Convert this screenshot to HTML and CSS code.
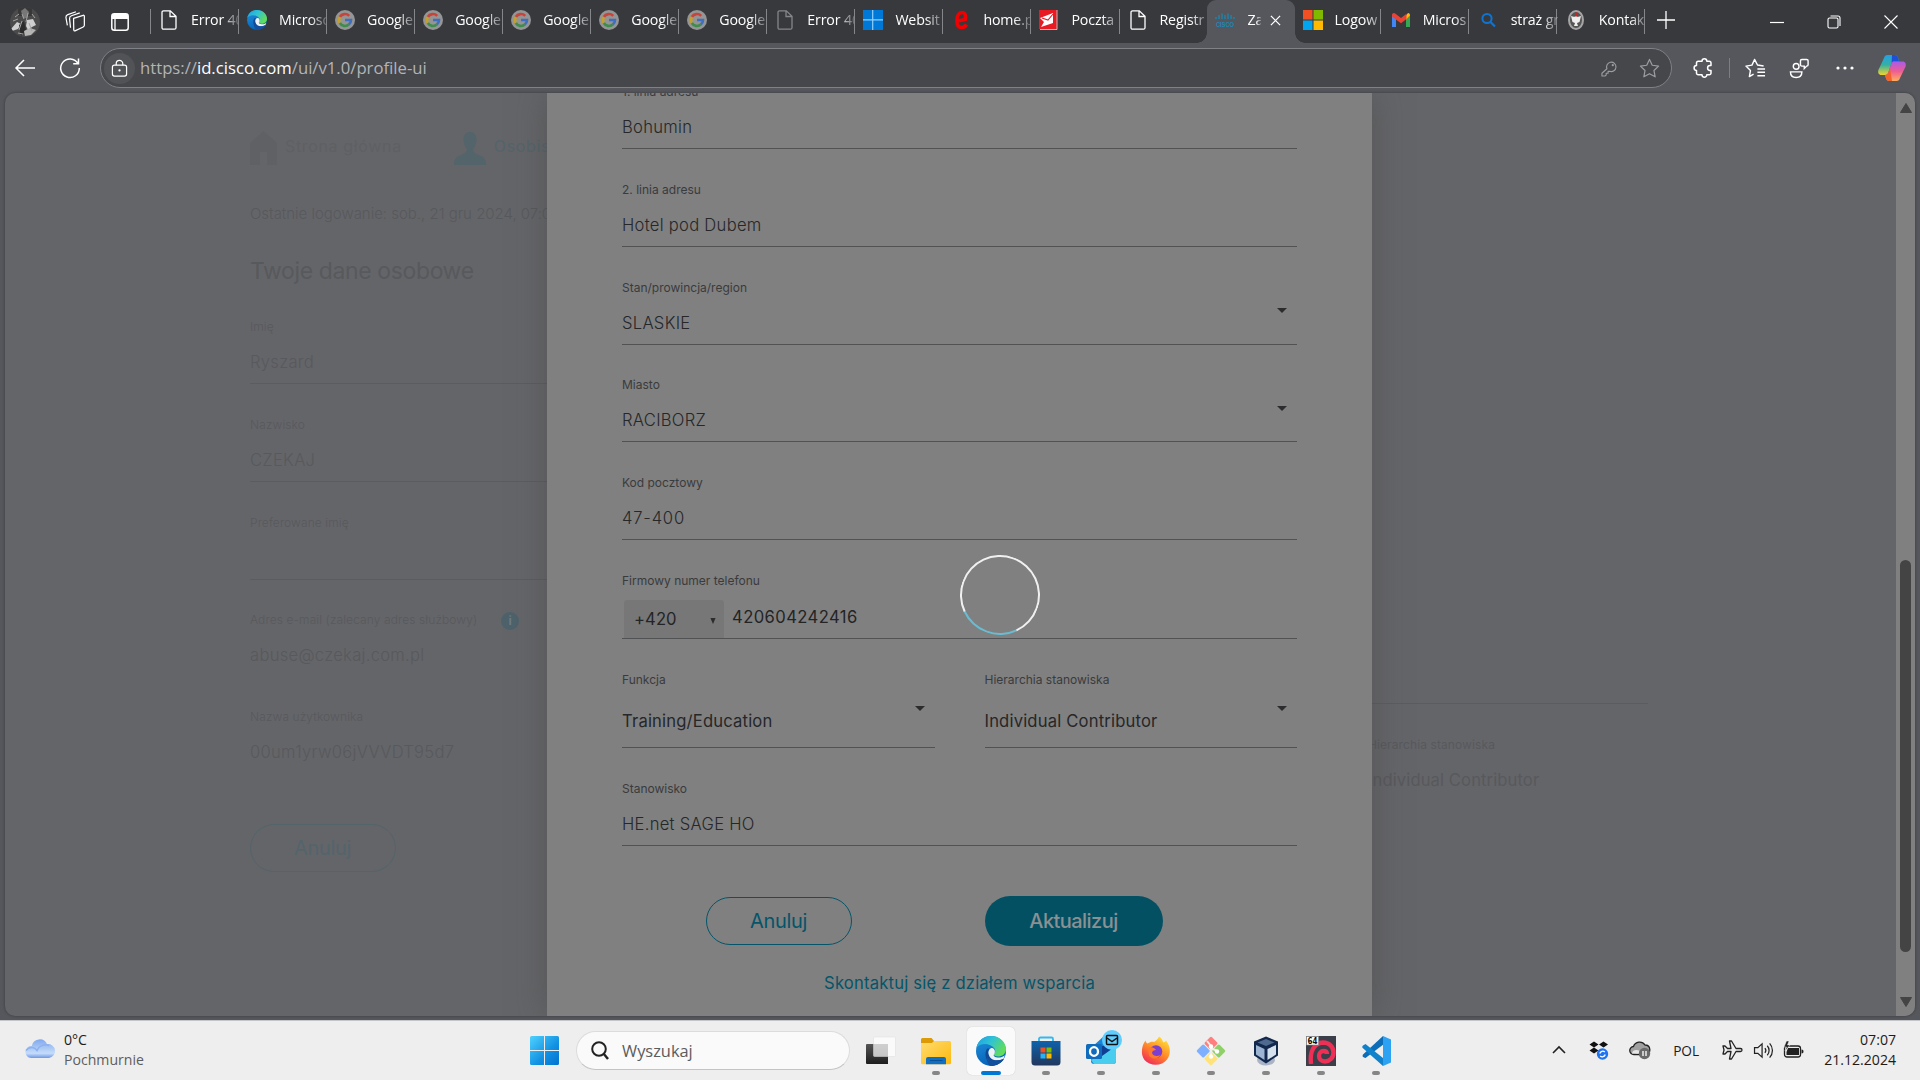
FILE: index.html
```
<!DOCTYPE html>
<html lang="pl">
<head>
<meta charset="utf-8">
<title>Zarządzanie profilem</title>
<link rel="stylesheet" href="styles.css">
</head>
<body>
<svg class="defs" aria-hidden="true">
  <defs>
    <linearGradient id="edgeA" x1="0" y1="0" x2="1" y2=".5"><stop offset="0" stop-color="#1b9de2"/><stop offset=".5" stop-color="#2fc3d4"/><stop offset="1" stop-color="#62dc5b"/></linearGradient>
    <linearGradient id="edgeB" x1="0" y1="0" x2=".4" y2="1"><stop offset="0" stop-color="#2292dc"/><stop offset="1" stop-color="#0562b8"/></linearGradient>
    <linearGradient id="winG" x1="0" y1="0" x2="1" y2="1"><stop offset="0" stop-color="#4fd2ff"/><stop offset=".6" stop-color="#1290e2"/><stop offset="1" stop-color="#0073cf"/></linearGradient>
    <linearGradient id="cloudG" x1="0" y1="0" x2="0" y2="1"><stop offset="0" stop-color="#80a9ee"/><stop offset=".75" stop-color="#c5dcfa"/><stop offset="1" stop-color="#6e98e6"/></linearGradient>
    <linearGradient id="folderG" x1="0" y1="0" x2="1" y2="1"><stop offset="0" stop-color="#ffdc70"/><stop offset="1" stop-color="#fcb90e"/></linearGradient>
    <linearGradient id="storeG" x1="0" y1="0" x2="0" y2="1"><stop offset="0" stop-color="#0f62ab"/><stop offset="1" stop-color="#22375e"/></linearGradient>
    <linearGradient id="foxG" x1=".8" y1="0" x2=".2" y2="1"><stop offset="0" stop-color="#ffe63e"/><stop offset=".5" stop-color="#ff8a26"/><stop offset="1" stop-color="#f0235e"/></linearGradient>
    <linearGradient id="copA" x1="0" y1="0" x2="0" y2="1"><stop offset="0" stop-color="#23a0e8"/><stop offset=".5" stop-color="#35b0a0"/><stop offset="1" stop-color="#f2d42c"/></linearGradient>
    <linearGradient id="copB" x1="0" y1="0" x2="0" y2="1"><stop offset="0" stop-color="#a95bea"/><stop offset=".5" stop-color="#ee5c93"/><stop offset="1" stop-color="#ffae5c"/></linearGradient>
    <linearGradient id="darkG" x1="0" y1="0" x2="0" y2="1"><stop offset="0" stop-color="#555"/><stop offset="1" stop-color="#1d1d1d"/></linearGradient>
    <symbol id="file" viewBox="0 0 20 20"><path d="M4.500.8h6.800L17 6.300V17.700a1.500 1.500 0 0 1-1.500 1.500h-11A1.500 1.500 0 0 1 3 17.700V2.300A1.500 1.500 0 0 1 4.500.8zM11 1v5.500h5.800" fill="none" stroke="currentColor" stroke-width="1.300"/></symbol>
    <symbol id="google" viewBox="0 0 20 20"><circle cx="10" cy="10" r="10" fill="#959595"/><g fill="none" stroke-width="2.600"><path d="M14.200 5.800A6 6 0 0 0 4.800 7" stroke="#c5453a"/><path d="M4.800 7a6 6 0 0 0 0 6" stroke="#c6a02a"/><path d="M4.800 13a6 6 0 0 0 9 1.600" stroke="#3e8d4e"/><path d="M13.800 14.600A6 6 0 0 0 16 10h-6" stroke="#3f6fc0"/></g></symbol>
    <symbol id="edge" viewBox="0 0 30 30"><circle cx="15" cy="15" r="15" fill="url(#edgeB)"/><path d="M.3 12C2 4 8 0 15 0c9 0 15 6.500 15 13 0 5-4 7.500-8 7.500-3 0-4.500-1-4-2.500 1.500-2 1.500-4 .5-5.500C14 6.500 4 6.500.3 12z" fill="url(#edgeA)"/><path d="M11.200 12.500C8 17 9 25 15.500 28c5 1.500 10-1 12.500-5-6 3-14 2-15.500-5-.3-2 .3-4 1.300-5.300z" fill="#104a95"/><path d="M18 18.500c-1.200 1.400 1 3 4.500 3 2.600 0 4.500-.8 6.300-2.300L27.500 23c-6.500 3-14 1-15-5.500-.5-3 1.500-5.500 3.500-5.500 2.500 0 4 4 2 6.500z" fill="#eef3f7"/><path d="M11.200 20C13 25 21 26 28 22.600 25 28 19 31 13.500 29.500 11 27 10.500 23 11.200 20z" fill="#124f9c"/></symbol>
    <symbol id="caret" viewBox="0 0 10 5"><path d="M0 0h10L5 5z" fill="#2c2c2e"/></symbol>
  </defs>
</svg>

<header class="tabstrip">
  <div class="strip-tools">
    <svg class="avatar" viewBox="0 0 30 30"><defs><clipPath id="av"><circle cx="15" cy="15" r="15"/></clipPath></defs><g clip-path="url(#av)"><path d="M0 0h30v30H0z" fill="#4b4b4b"/><path d="M8 0h14v9H8z" fill="#383838"/><path d="M11 4l4-3 4 4-2 6h-4z" fill="#777"/><path d="M1 22l6-7 4 2-3 5-6 2zM17 13l6-1 3 6-4 2-4 3-2-4z" fill="#cfcfcf"/><path d="M9 18l5-4 2 9-5 6z" fill="#2b2b2b"/><path d="M14 24l6-3 6 2-5 5-6 1z" fill="#b5b5b5"/><path d="M12 7l2 5M18 6l-2 9M5 10l4-3M22 7l3 4M3 14l5-2M12 14l-3 9M19 16l3 8M8 26l5 1" stroke="#a2a2a2"/></g></svg>
    <svg class="i22 ws" viewBox="0 0 22 22"><g fill="none" stroke="currentColor" stroke-width="1.300" stroke-linejoin="round"><path d="M9.500 7.800l10-3.300a1 1 0 0 1 1.300 1v9.500a2 2 0 0 1-1.200 1.700L11 20.800a1 1 0 0 1-1.300-1z"/><path d="M6.300 17.500L5.300 8a3 3 0 0 1 2-3L16 2"/><path d="M3 15L1.500 6.800a3 3 0 0 1 2-3L12 .8"/></g></svg>
    <svg class="i18" viewBox="0 0 18 18"><rect x=".8" y=".8" width="16.400" height="16.400" rx="2.500" fill="none" stroke="#fff" stroke-width="1.500"/><path d="M1 3a2 2 0 0 1 2-2h12a2 2 0 0 1 2 2v3H1z" fill="#fff"/><path d="M4 6v11" stroke="#fff" stroke-width="1.300"/></svg>
  </div>
  <nav class="tabs">
    <div class="tab"><svg><use href="#file"/></svg><span>Error 40</span></div>
    <div class="tab"><svg><use href="#edge"/></svg><span>Microso</span></div>
    <div class="tab"><svg><use href="#google"/></svg><span>Google</span></div>
    <div class="tab"><svg><use href="#google"/></svg><span>Google</span></div>
    <div class="tab"><svg><use href="#google"/></svg><span>Google</span></div>
    <div class="tab"><svg><use href="#google"/></svg><span>Google</span></div>
    <div class="tab"><svg><use href="#google"/></svg><span>Google</span></div>
    <div class="tab"><svg class="dim"><use href="#file"/></svg><span>Error 40</span></div>
    <div class="tab"><svg viewBox="0 0 20 20"><path d="M0 0h20v20H0z" fill="#0078d7"/><path d="M9.700 0v20M0 9.800h20" stroke="#8fd0ff" stroke-width="1.200"/></svg><span>Websit</span></div>
    <div class="tab"><svg viewBox="0 0 20 20"><path d="M15.500 14.500c-1.200 2-3 3-5.200 3-3 0-4.300-3-4.300-6.800C6 5.500 8 2.500 11 2.500c3.500 0 4 4 3.300 7L6.500 11" fill="none" stroke="#f00000" stroke-width="3.600"/></svg><span>home.p</span></div>
    <div class="tab"><svg viewBox="0 0 20 20"><path d="M0 0h18v19H0z" fill="#e81b23"/><path d="M18 0v19.500H1" fill="none" stroke="#bbb"/><path d="M1 8l13-5v10L2 17l3-5z" fill="#fff"/><path d="M3 8l6 2 5-6" fill="none" stroke="#e81b23" stroke-width="1.100"/></svg><span>Poczta</span></div>
    <div class="tab"><svg><use href="#file"/></svg><span>Registr</span></div>
    <div class="tab active"><svg viewBox="0 0 20 20"><path d="M1 7v2M4 5v4M7 3.500V9M10 5v4M13 3.500V9M16 5v4M19 7v2" stroke="#1789b3" stroke-width="1.300"/><text x="1" y="17" textLength="18" lengthAdjust="spacingAndGlyphs" class="cisco">CISCO</text></svg><span>Za</span><svg class="close" viewBox="0 0 12 12"><path d="M1 1l10 10M11 1L1 11" stroke="#fff" stroke-width="1.400"/></svg></div>
    <div class="tab after"><svg viewBox="0 0 20 20"><path d="M0 0h9.500v9.500H0z" fill="#f25022"/><path d="M10.500 0H20v9.500h-9.500z" fill="#7fba00"/><path d="M0 10.500h9.500V20H0z" fill="#00a4ef"/><path d="M10.500 10.500H20V20h-9.500z" fill="#ffb900"/></svg><span>Logow</span></div>
    <div class="tab after"><svg viewBox="0 0 20 20"><path d="M1 4.500V17h4V9z" fill="#4285f4"/><path d="M19 4.500V17h-4V9z" fill="#34a853"/><path d="M15 5.500L17 3c1.500 0 2 1 2 2.500L15 9.500z" fill="#fbbc04"/><path d="M1 5.500C1 3 3 2.500 4.500 3.700L10 8l5.500-4.300V9L10 13.300 1 6.500z" fill="#ea4335"/></svg><span>Micros</span></div>
    <div class="tab after"><svg viewBox="0 0 20 20"><circle cx="8" cy="8.500" r="4.600" fill="none" stroke="#0f74d1" stroke-width="2"/><path d="M11.500 12l4.500 4.500" stroke="#0f74d1" stroke-width="2.200"/></svg><span>straż gr</span></div>
    <div class="tab after"><svg viewBox="0 0 20 20"><ellipse cx="9" cy="10" rx="7" ry="9" fill="#555" stroke="#a5a5a5" stroke-width="2"/><path d="M9 4l1.500 3L14 6l-1.500 6L10 13l1 3H7l1-3-2.500-1L4 6l3.500 1z" fill="#eee"/><path d="M8 2.500h2.500v4H8z" fill="#c22"/></svg><span>Kontak</span></div>
  </nav>
  <svg class="plus" viewBox="0 0 18 18"><path d="M9 0v18M0 9h18" stroke="#fff" stroke-width="1.300"/></svg>
  <div class="window-buttons">
    <svg viewBox="0 0 14 14"><path d="M0 7.500h14" stroke="#fff" stroke-width="1.200"/></svg>
    <svg viewBox="0 0 14 14"><g fill="none" stroke="#fff" stroke-width="1.100"><rect x="1" y="3" width="10" height="10" rx="1.500"/><path d="M3.500 1H11a2 2 0 0 1 2 2v8"/></g></svg>
    <svg viewBox="0 0 14 14"><path d="M.5.500l13 13M13.500.5l-13 13" stroke="#fff" stroke-width="1.100"/></svg>
  </div>
</header>

<div class="toolbar">
  <svg class="back" viewBox="0 0 20 18"><path d="M9 1L1 9l8 8M1 9h19" fill="none" stroke="#fff" stroke-width="1.500"/></svg>
  <svg class="reload" viewBox="0 0 22 22"><path d="M19 6.500A9.300 9.300 0 1 0 20.300 11M19.500 1.500v5.300h-5.300" fill="none" stroke="#fff" stroke-width="1.500"/></svg>
  <div class="address">
    <div class="lock"><svg viewBox="0 0 18 18"><g fill="none" stroke="#fff" stroke-width="1.300"><rect x="1.500" y="5.500" width="15" height="11.500" rx="2.200"/><path d="M5.500 5.500V4a3.500 3.500 0 0 1 7 0v1.500"/></g><circle cx="9" cy="11" r="1.200" fill="#fff"/></svg></div>
    <div class="url">https://<b>id.cisco.com</b>/ui/v1.0/profile-ui</div>
    <svg class="key" viewBox="0 0 18 18"><path d="M6.300 9.300a5 5 0 1 1 3 2.700H7.500v2H5.500v2l-1.300 1H1v-3z" fill="none" stroke="#9c9da0" stroke-width="1.200" stroke-linejoin="round"/><circle cx="12.500" cy="5.500" r="1.200" fill="#9c9da0"/></svg>
    <svg class="star" viewBox="0 0 22 22"><path d="M11 1.500l2.900 6.100 6.600.9-4.800 4.600 1.200 6.600-5.900-3.200-5.900 3.200 1.200-6.600L1.500 8.500l6.600-.9z" fill="none" stroke="#9c9da0" stroke-width="1.300" stroke-linejoin="round"/></svg>
  </div>
  <svg class="puzzle" viewBox="0 0 22 22"><path d="M3.500 6A1.800 1.800 0 0 1 5.300 4.200H9a2.400 2.400 0 0 1 4.800 0h2.400A1.800 1.800 0 0 1 18 6v2.600h-1a2.400 2.400 0 0 0 0 4.800h1V16a1.800 1.800 0 0 1-1.800 1.800h-2.400a2.400 2.400 0 0 1-4.800 0H5.300A1.800 1.800 0 0 1 3.500 16v-2.600a2.400 2.400 0 0 1 0-4.800z" fill="none" stroke="#fff" stroke-width="1.500" stroke-linejoin="round"/></svg>
  <i class="divider"></i>
  <svg class="fav" viewBox="0 0 22 22"><path d="M19.500 8.300l-6.400-1L10 1.500 7.300 7.500 1 8.500l4.700 4.700-1.100 6.300L9 17M13 11.500h8M13 15h8M13 18.500h8" fill="none" stroke="#fff" stroke-width="1.500" stroke-linejoin="round"/></svg>
  <svg class="people" viewBox="0 0 22 22"><g fill="none" stroke="#fff" stroke-width="1.500"><circle cx="7.500" cy="8.800" r="3"/><path d="M1.500 14.500h12c0 4-2.300 6-6 6s-6-2-6-6zM12 3a1.500 1.500 0 0 1 1.500-1.500h5A1.500 1.500 0 0 1 20 3v4a1.500 1.500 0 0 1-1.500 1.500L16 11V8.500h-2.500A1.500 1.500 0 0 1 12 7z"/></g></svg>
  <svg class="dots" viewBox="0 0 18 4"><g fill="#fff"><circle cx="2" cy="2" r="1.600"/><circle cx="9" cy="2" r="1.600"/><circle cx="16" cy="2" r="1.600"/></g></svg>
  <svg class="copilot" viewBox="0 0 28 26"><path d="M6 3c.6-2 1.500-3 3.500-3h7c2 0 3 1 3.600 3l1 3.500h-5c-1.500 0-2.500 1-3 2.700L10.500 17c-.6 2-1.500 3-3.500 3H3.500C.5 20-.3 17.500.4 15z" fill="url(#copA)"/><path d="M14 0h2.500c2 0 3 1 3.600 3l1 3.500H16c-1 0-1.800.5-2.400 1.400z" fill="#1d4fd7"/><path d="M22 23c-.6 2-1.500 3-3.500 3h-7c-2 0-3-1-3.600-3l-.9-3c2 0 3-1 3.600-3l2.400-7.700c.5-1.800 1.500-2.800 3-2.800h8.500c3 0 3.800 2.500 3.100 5z" fill="url(#copB)"/><path d="M14 26h-2.500c-2 0-3-1-3.600-3L7 20c2 0 3-1 3.600-3l1.400-4.500z" fill="#f2622d"/></svg>
</div>

<main class="viewport">
  <div class="page">
    <nav class="page-nav">
      <svg class="home" viewBox="0 0 27 34"><path d="M13.500 0L27 12v22H17V21h-7v13H0V12z" fill="#606164"/></svg><span class="faint">Strona główna</span>
      <svg class="person" viewBox="0 0 32 33"><path d="M16 0c4 0 6.500 3 6.500 7.500 0 4.500-2 8-3.500 10 0 3 3 4.500 8 6.500 3.500 1.500 5 4 5 9H0c0-5 1.500-7.500 5-9 5-2 8-3.500 8-6.500-1.500-2-3.500-5.500-3.500-10C9.500 3 12 0 16 0z" fill="#53646b"/></svg><span class="teal">Osobiste</span>
    </nav>
    <p class="last-login">Ostatnie logowanie: sob., 21 gru 2024, 07:06</p>
    <h1>Twoje dane osobowe</h1>
    <div class="columns">
      <section class="col-left">
        <div class="field first"><label>Imię</label><span>Ryszard</span></div>
        <div class="field"><label>Nazwisko</label><span>CZEKAJ</span></div>
        <div class="field"><label>Preferowane imię</label><span></span></div>
        <div class="field plain"><label>Adres e-mail (zalecany adres służbowy)<i class="info">i</i></label><span>abuse@czekaj.com.pl</span></div>
        <div class="field plain"><label>Nazwa użytkownika</label><span>00um1yrw06jVVVDT95d7</span></div>
        <div class="btn outline">Anuluj</div>
      </section>
      <section class="col-right">
        <div class="field plain"><label>Hierarchia stanowiska</label><span>Individual Contributor</span></div>
      </section>
    </div>
  </div>

  <form class="modal">
    <div class="field f1"><label>1. linia adresu</label><span>Bohumin</span></div>
    <div class="field"><label>2. linia adresu</label><span>Hotel pod Dubem</span></div>
    <div class="field"><label>Stan/prowincja/region</label><span>SLASKIE</span><svg class="caret"><use href="#caret"/></svg></div>
    <div class="field short"><label>Miasto</label><span>RACIBORZ</span><svg class="caret"><use href="#caret"/></svg></div>
    <div class="field"><label>Kod pocztowy</label><span class="digits">47-400</span></div>
    <div class="field phone"><label>Firmowy numer telefonu</label>
      <div class="phone-row"><div class="prefix">+420<svg viewBox="0 0 6 7"><path d="M0 0h6L3 7z" fill="#2c2c2e"/></svg></div><span>420604242416</span></div>
    </div>
    <div class="pair">
      <div class="field"><label>Funkcja</label><span>Training/Education</span><svg class="caret"><use href="#caret"/></svg></div>
      <div class="field"><label>Hierarchia stanowiska</label><span>Individual Contributor</span><svg class="caret"><use href="#caret"/></svg></div>
    </div>
    <div class="field"><label>Stanowisko</label><span>HE.net SAGE HO</span></div>
    <div class="actions"><div class="btn outline">Anuluj</div><div class="btn solid">Aktualizuj</div></div>
    <a class="support">Skontaktuj się z działem wsparcia</a>
  </form>
  <div class="spinner"></div>

  <div class="scrollbar">
    <svg viewBox="0 0 12 10"><path d="M6 0.500L11.500 9.500H.5z" fill="#444" stroke="#444" stroke-linejoin="round"/></svg>
    <i></i>
    <svg viewBox="0 0 12 10"><path d="M6 9.500L.5.500h11z" fill="#444" stroke="#444" stroke-linejoin="round"/></svg>
  </div>
</main>

<footer class="taskbar">
  <div class="weather">
    <svg viewBox="0 0 30 20"><path d="M6 19.500a6 6 0 0 1 .8-12A8 8 0 0 1 22 5.600a7 7 0 0 1 2 13.900z" fill="url(#cloudG)"/><path d="M1 12c4-5 9-3 11 0 2-5 8-7 12-5" fill="none" stroke="#8db1ef" stroke-width="1.500"/></svg>
    <div><p>0°C</p><p class="muted">Pochmurnie</p></div>
  </div>
  <div class="dock">
    <svg class="start" viewBox="0 0 29 29"><path d="M0 1.500A1.500 1.500 0 0 1 1.500 0H14v14H0zM15 0h12.500A1.500 1.500 0 0 1 29 1.500V14H15zM0 15h14v14H1.500A1.500 1.500 0 0 1 0 27.500zM15 15h14v12.500a1.500 1.500 0 0 1-1.500 1.500H15z" fill="url(#winG)"/></svg>
    <div class="search"><svg viewBox="0 0 18 19"><circle cx="8" cy="8" r="6.800" fill="none" stroke="#222" stroke-width="2"/><path d="M12.500 12.500L17 18" stroke="#222" stroke-width="2.400"/></svg>Wyszukaj</div>
    <div class="app"><svg viewBox="0 0 30 30"><path d="M0 9a1 1 0 0 1 1-1h21v20H1a1 1 0 0 1-1-1z" fill="url(#darkG)"/><rect x="7.500" y="1" width="22" height="19.500" rx="1" fill="#fff" fill-opacity=".72" stroke="#ddd" stroke-width=".5"/></svg></div>
    <div class="app run"><svg viewBox="0 0 30 30"><path d="M0 3.500A1.500 1.500 0 0 1 1.500 2h9l2.500 3v3H0z" fill="#db9a06"/><path d="M0 7h11l2-2h15.500A1.500 1.500 0 0 1 30 6.500V27a1.300 1.300 0 0 1-1.300 1.300H1.300A1.300 1.300 0 0 1 0 27z" fill="url(#folderG)"/><path d="M5 28.300V23a2 2 0 0 1 2-2h16a2 2 0 0 1 2 2v5.300z" fill="#0f6fc3"/><path d="M9 24.500h12.500" stroke="#0a4f94"/></svg></div>
    <div class="app run current"><svg><use href="#edge"/></svg></div>
    <div class="app run"><svg viewBox="0 0 30 30"><path d="M8 6V3a1.500 1.500 0 0 1 1.500-1.500h11A1.500 1.500 0 0 1 22 3v3" fill="none" stroke="#35b8ee" stroke-width="1.800"/><path d="M.5 5h29v21a3.500 3.500 0 0 1-3.500 3.500H4A3.500 3.500 0 0 1 .5 26z" fill="url(#storeG)"/><path d="M9.500 11.500h5v5h-5z" fill="#f25022"/><path d="M15.500 11.500h5v5h-5z" fill="#7fba00"/><path d="M9.500 17.500h5v5h-5z" fill="#26b2f5"/><path d="M15.500 17.500h5v5h-5z" fill="#ffb900"/></svg></div>
    <div class="app run"><svg class="outlook" viewBox="0 0 36 36"><path d="M6 17L18 6l12 10v15a3 3 0 0 1-3 3H8a3 3 0 0 1-3-3z" fill="#1686d9"/><path d="M30 16v15a3 3 0 0 1-3 3H8l-3-4z" fill="#49cdee"/><path d="M14 16h16L16 26z" fill="#103f91"/><rect y="14" width="16" height="15" rx="1.500" fill="#0f6cbd"/><ellipse cx="8" cy="21.500" rx="4" ry="4.300" fill="none" stroke="#fff" stroke-width="2.300"/><circle cx="26" cy="10" r="10" fill="#60cdff"/><g fill="none" stroke="#111" stroke-width="1.500"><rect x="20.500" y="5.500" width="11" height="9" rx="1"/><path d="M21 8l5 3.500L31 8"/></g></svg></div>
    <div class="app run"><svg viewBox="0 0 30 30"><path d="M18 .5c3 2 4 4.500 4 6 2-.5 2.500-1 3-2 5 6.500 5 14 1 19-5 7-17 7-22.500.5C-1 18 1 9 4.500 4.500c.5 2 1 2.500 2 3C9 6 11 5.500 13 6c2-1 4-3 5-5.500z" fill="url(#foxG)"/><circle cx="15" cy="15.500" r="6.300" fill="#7c3fd0"/><path d="M7 12c4-2 7 0 8 2-2 0-4 1-4 3 1 3 5 4 8 2-1 4-9 5-11 0z" fill="#ff7a2c"/></svg></div>
    <div class="app run"><svg viewBox="0 0 30 30"><g transform="rotate(45 15 15)"><rect x="4.500" y="4.500" width="10" height="10" rx="1.500" fill="#ff7f7f"/><rect x="15.500" y="4.500" width="10" height="10" rx="1.500" fill="#8fd068"/><rect x="4.500" y="15.500" width="10" height="10" rx="1.500" fill="#7fb0ff"/><rect x="15.500" y="15.500" width="10" height="10" rx="1.500" fill="#ffe37a"/></g><path d="M11 5l4 5v11M15 12l6 3" stroke="#f2efe6" stroke-width="2" fill="none"/><circle cx="15" cy="10.500" r="2.200" fill="#fff"/><circle cx="21" cy="15.500" r="2.200" fill="#fff"/><circle cx="15" cy="20.500" r="2.200" fill="#fff"/></svg></div>
    <div class="app run"><svg viewBox="0 0 30 30"><ellipse cx="15" cy="24" rx="9" ry="5.500" fill="#aab4c6"/><path d="M15 .5l12 5v14l-12 8-12-8v-14z" fill="#12284c"/><path d="M15 3l8.500 3.500L15 10 6.500 6.500z" fill="#50698f"/><path d="M5 9l8.500 4v11L5 18.500z" fill="#9db4d2"/><path d="M25 9l-8.500 4v11l8.500-5.500z" fill="#d5e1ef"/></svg></div>
    <div class="app run"><svg viewBox="0 0 30 30"><path d="M0 0h30v30H0z" fill="#3a3f49"/><path d="M5 28C3.500 15 8 7 17 6.500c6.500 0 10.500 4.500 10.500 10S23.500 25.500 19 25.500c-4 0-6-2.700-6-5.500s2-5 4.500-5 3.500 1.500 3.500 3" fill="none" stroke="#ee2f56" stroke-width="4.400"/><rect x=".5" y=".5" width="12" height="8.500" fill="#fff" stroke="#888" stroke-width=".6"/><text x="1.500" y="7.600" textLength="10" lengthAdjust="spacingAndGlyphs" class="badge64">64</text></svg></div>
    <div class="app run"><svg viewBox="0 0 30 30"><path d="M22 0L2 18.500c-1 1 0 2.500 1 3l1.500.5L23 8z" fill="#0d6db8"/><path d="M4.500 8L2 9.500c-1 .8-1 2 0 2.800L22 30V22z" fill="#1082cc"/><path d="M22 0l8 3.500v23L22 30z" fill="#2ea2f2"/></svg></div>
  </div>
  <div class="tray">
    <svg class="chev" viewBox="0 0 14 8"><path d="M1 7l6-6 6 6" fill="none" stroke="#222" stroke-width="1.600"/></svg>
    <svg class="dropbox" viewBox="0 0 20 20"><path d="M5 1.500l4.500 3L5 7.500l-4.500-3zM14.500 1.500l4.500 3-4.500 3-4.500-3zM5 7.500l4.500 3-4.500 3-4.500-3z" fill="#111"/><circle cx="13.500" cy="14" r="5.700" fill="#1e73f0"/><path d="M10.800 13.500a3 3 0 0 1 5-1.500M16.200 14.500a3 3 0 0 1-5 1.500" fill="none" stroke="#fff" stroke-width="1.300"/></svg>
    <svg class="cloud" viewBox="0 0 22 20"><path d="M5 14.500a4 4 0 0 1-.5-8A6.500 6.500 0 0 1 16 5a4.800 4.800 0 0 1 1 9.500z" fill="#a0a0a0" stroke="#222" stroke-width="1.300"/><path d="M3 13.500c0-4 5-4 7-3l4 3.500z" fill="#e6e6e6"/><circle cx="15.500" cy="13.500" r="5.700" fill="#6a6a6a"/><path d="M14 11v5M17 11v5" stroke="#fff" stroke-width="1.300"/></svg>
    <span class="lang">POL</span>
    <svg class="plane" viewBox="0 0 22 20"><path d="M1 6h2l2.500 2.500H9L7.500 1h2L14 8.500h4.500a1.500 1.500 0 0 1 0 3H14L9.500 19h-2L9 11.500H5.500L3 14H1l1-4z" fill="none" stroke="#222" stroke-width="1.300" stroke-linejoin="round"/></svg>
    <svg class="sound" viewBox="0 0 21 18"><g fill="none" stroke="#222" stroke-width="1.300"><path d="M1 6h3.500L9 2v14l-4.500-4H1z"/><path d="M12 6.500a4 4 0 0 1 0 5M14.500 4a7.500 7.500 0 0 1 0 10M17 1.500a11 11 0 0 1 0 15"/></g></svg>
    <svg class="battery" viewBox="0 0 21 18"><rect x="1.500" y="5" width="16" height="11" rx="2.500" fill="none" stroke="#222" stroke-width="1.300"/><path d="M5 7h11v7H3.500v-3zM18.500 8.500c1.500 0 2 .8 2 2s-.5 2-2 2z" fill="#222"/><path d="M3.500 0L1 6h2.500L2 10l5-6H4.500L6 0z" fill="#222" stroke="#eee" stroke-width=".5"/></svg>
    <div class="clock"><p>07:07</p><p>21.12.2024</p></div>
  </div>
</footer>
</body>
</html>
```
FILE: styles.css
```
* { box-sizing: border-box; }
body { margin: 0; width: 1920px; height: 1080px; overflow: hidden; display: flex; flex-direction: column; background: #56575d; font-family: "Open Sans", sans-serif; }
p, h1 { margin: 0; font-weight: 400; }
svg { display: block; flex: none; overflow: visible; }
.defs { position: absolute; width: 0; height: 0; }

/* tab strip */
.tabstrip { height: 43px; flex: none; display: flex; align-items: center; background: #38393d; color: #fff; }
.strip-tools { width: 150px; height: 40px; padding-left: 10px; display: flex; align-items: center; }
.avatar { width: 30px; height: 30px; }
.i22 { width: 22px; height: 21px; margin-left: 24px; }
.i18 { width: 18px; height: 18px; margin-left: 25px; }
.tabs { display: flex; align-self: stretch; }
.tab { width: 88.050px; height: 40px; display: flex; align-items: center; padding-left: 9px; font-size: 14.200px; letter-spacing: -.15px; position: relative; }
.tab::before { content: ""; position: absolute; left: 0; top: 9px; width: 1px; height: 25px; background: #85868a; }
.tab svg { width: 20px; height: 20px; }
.tab svg.dim { color: #85868a; }
.tab span { margin: 0 0 2px 12px; width: 47px; overflow: hidden; white-space: nowrap; -webkit-mask-image: linear-gradient(90deg, #000 65%, rgba(0, 0, 0, .25)); mask-image: linear-gradient(90deg, #000 65%, rgba(0, 0, 0, .25)); }
.tab.active { height: 43px; padding: 0 0 3px 8px; background: #56575d; border-radius: 9px 9px 0 0; }
.tab.active::before, .tab.active::after { left: -10px; top: auto; bottom: 0; width: 10px; height: 10px; background: radial-gradient(circle at 0 0, #38393d 9.500px, #56575d 10px); }
.tab.active::after { content: ""; position: absolute; left: 100%; background: radial-gradient(circle at 100% 0, #38393d 9.500px, #56575d 10px); }
.tab.active span { width: 13px; margin-left: 13px; }
.tab.active .close { width: 11px; height: 11px; margin-left: 9px; }
.cisco { font: 700 6.500px "Liberation Sans", sans-serif; fill: #1789b3; }
.tab.after { padding-left: 8px; }
.tab.after::before { left: auto; right: 2px; }
.plus { width: 18px; height: 18px; margin-left: 10px; margin-top: -4px; }
.window-buttons { display: flex; gap: 43px; margin-left: auto; margin-right: 22px; }
.window-buttons svg { width: 14px; height: 14px; }

/* toolbar */
.toolbar { height: 50px; flex: none; display: flex; align-items: center; padding-left: 15px; }
.back { width: 20px; height: 18px; }
.reload { width: 22px; height: 22px; margin-left: 24px; }
.address { width: 1572px; height: 40px; margin-left: 19px; display: flex; align-items: center; padding-left: 3px; border: 1px solid #808186; border-radius: 20px; background: #46474b; }
.lock { width: 31px; height: 31px; border-radius: 50%; background: #525357; display: flex; align-items: center; justify-content: center; }
.lock svg { width: 17px; height: 17px; }
.url { flex: 1; margin-left: 5px; font-size: 16.700px; line-height: 24px; color: #b3b4b7; }
.url b { font-weight: 400; color: #fff; }
.key { width: 17px; height: 17px; }
.star { width: 21px; height: 21px; margin: 0 11px 0 21px; }
.puzzle { width: 22px; height: 22px; margin-left: 21px; }
.divider { width: 1px; height: 20px; background: #7d7e83; margin-left: 14px; }
.fav { width: 21px; height: 21px; margin-left: 15px; }
.people { width: 21px; height: 21px; margin-left: 23px; }
.dots { width: 18px; height: 4px; margin-left: 26px; }
.copilot { width: 28px; height: 26px; margin-left: 24px; }

/* web page behind the dialog */
.viewport { width: 1910px; height: 923px; flex: none; margin-left: 5px; position: relative; display: flex; overflow: hidden; border-radius: 10px; background: #646569; box-shadow: 0 0 3px rgba(0, 0, 0, .35); font-family: Inter, sans-serif; }
.page { flex: 1; padding: 30px 0 0 245px; color: #58595c; white-space: nowrap; }
.page-nav { height: 50px; display: flex; align-items: center; font-size: 16px; }
.home { width: 27px; height: 34px; }
.person { width: 32px; height: 33px; margin-left: 52px; }
.page-nav span { margin-left: 8px; line-height: 20px; padding-bottom: 4px; font-weight: 400; letter-spacing: .65px; }
.faint { color: #5f6063; }
.teal { color: #53646b; }
.last-login { margin-top: 26px; line-height: 30px; font-size: 15px; font-weight: 300; letter-spacing: -.02px; }
h1 { margin-top: 22px; line-height: 40px; font-size: 23px; letter-spacing: -.38px; }
.columns { display: flex; }
.col-left { width: 640px; }
.col-right { width: 280px; margin: 412px 0 0 478px; border-top: 1px solid #5b5c60; }
.page .field { border-bottom-color: #5b5c60; }
.page .plain { border-color: transparent; }
.page .first { height: 93px; }
.page .field + .plain, .page .plain + .plain { height: 97px; }
.col-right .field { font-weight: 400; letter-spacing: .1px; }
.page .btn { margin-top: 50px; border-color: #53646b; color: #53646b; }
.info { display: inline-block; width: 18px; height: 18px; margin: -1px 0 -2px 24px; border-radius: 50%; background: #4d626b; color: #6d7a80; text-align: center; font: 700 12px/18px Inter, sans-serif; vertical-align: middle; }

/* shared form parts */
.field { height: 98px; flex: none; position: relative; display: flex; flex-direction: column; justify-content: flex-end; border-bottom: 1px solid #515253; padding-bottom: 11px; font-size: 16.600px; letter-spacing: .28px; font-weight: 300; white-space: nowrap; }
.field label { line-height: 16px; margin-bottom: 17px; font-size: 12px; letter-spacing: .1px; }
.field > span { line-height: 20px; height: 20px; }
.btn { display: flex; align-items: center; justify-content: center; width: 146px; height: 48px; padding: 0 1px 1px 0; border: 1px solid #045569; border-radius: 24px; color: #045569; font-size: 20px; letter-spacing: -.35px; }
.caret { position: absolute; right: 10px; bottom: 31px; width: 10px; height: 5px; }

/* dialog */
.modal { position: absolute; left: 542px; top: 0; width: 825px; height: 923px; padding: 0 75px; background: #808080; color: #262729; box-shadow: 0 0 30px rgba(70, 72, 68, .5); display: flex; flex-direction: column; }
.modal label { color: #3a3b3d; font-weight: 400; letter-spacing: 0; }
.modal .f1 { height: 56px; }
.modal .short { height: 97px; }
.modal .short .caret { bottom: 30px; }
.modal .digits { letter-spacing: .8px; }
.modal .phone { height: 99px; padding: 0; }
.phone label { margin-bottom: 11px; }
.phone-row { height: 38px; display: flex; align-items: center; padding: 0 0 4px 2px; font-weight: 400; letter-spacing: .42px; color: #232425; }
.prefix { width: 100px; height: 38px; margin: 4px 8px 0 0; padding: 0 8px 1px 10px; display: flex; align-items: center; justify-content: space-between; background: #777; border-radius: 3px 3px 0 0; letter-spacing: .1px; }
.prefix svg { width: 6px; height: 6px; margin-top: 4px; }
.pair { display: flex; gap: 50px; }
.pair .field { flex: 1; height: 109px; padding-bottom: 16px; font-weight: 400; letter-spacing: .18px; }
.pair .field label { margin-bottom: 23px; }
.pair .caret { bottom: 36px; }
.actions { display: flex; align-items: center; gap: 133px; margin: 50px 0 0 84px; }
.solid { width: 178px; height: 50px; border: 0; border-radius: 25px; background: #045063; color: #8a9193; font-weight: 500; letter-spacing: -.55px; }
.support { margin-top: 25px; text-align: center; font-size: 16.600px; line-height: 24px; letter-spacing: .2px; color: #045569; }
.spinner { position: absolute; left: 955px; top: 462px; width: 80px; height: 80px; border: 2.500px solid #f0f0f0; border-bottom-color: #68bdd3; border-radius: 50%; transform: rotate(20deg); }

.scrollbar { width: 19px; display: flex; flex-direction: column; align-items: center; padding: 10px 0 9px; background: #808080; }
.scrollbar svg { width: 12px; height: 10px; }
.scrollbar i { width: 11px; height: 392px; margin: 447px 0 auto; border-radius: 6px; background: #444; }

/* taskbar */
.taskbar { height: 60px; flex: none; margin-top: 4px; display: flex; align-items: center; background: #eee; border-top: 1px solid #c4c5c9; font-size: 14.100px; color: #1c1c1c; }
.weather { width: 530px; display: flex; align-items: center; padding-left: 25px; line-height: 20px; }
.weather > div { padding-bottom: 2px; }
.weather svg { width: 30px; height: 23px; margin: -4px 9px 0 0; }
.muted { color: #5d5d5d; }
.dock { display: flex; align-items: center; height: 59px; }
.start { width: 29px; height: 29px; }
.search { width: 274px; height: 39px; margin: 0 7px 0 17px; display: flex; align-items: center; padding: 0 0 1px 14px; background: #fafafa; border: 1px solid #dcdcdc; border-bottom-color: #c4c4c4; border-radius: 20px; font-size: 16.400px; color: #5c5c5c; }
.search svg { width: 18px; height: 19px; margin-right: 13px; }
.app { width: 48px; height: 48px; margin-right: 7px; display: flex; align-items: center; justify-content: center; position: relative; border-radius: 5px; }
.app svg { width: 30px; height: 30px; }
.app svg.outlook { width: 36px; height: 36px; margin: -6px 0 0 6px; }
.run::after { content: ""; position: absolute; bottom: 0; left: 20px; width: 8px; height: 4px; border-radius: 2px; background: #868686; }
.current { background: #fafafa; box-shadow: 0 0 1px #bbb; }
.current::after { left: 14px; width: 20px; background: #0078d4; }
.badge64 { font: 700 8px "DejaVu Sans", sans-serif; fill: #111; }
.tray { margin-left: auto; margin-right: 24px; padding-bottom: 1px; display: flex; align-items: center; }
.chev { width: 14px; height: 8px; margin-right: 23px; }
.dropbox { width: 20px; height: 20px; margin-right: 20px; }
.cloud { width: 22px; height: 20px; margin-right: 22px; }
.lang { width: 26px; margin-right: 23px; font-size: 13.700px; }
.plane { width: 22px; height: 20px; margin-right: 9px; }
.sound { width: 21px; height: 17px; margin-right: 9px; }
.battery { width: 21px; height: 18px; }
.clock { margin-left: 20px; padding-bottom: 1px; text-align: right; line-height: 20px; }
```
